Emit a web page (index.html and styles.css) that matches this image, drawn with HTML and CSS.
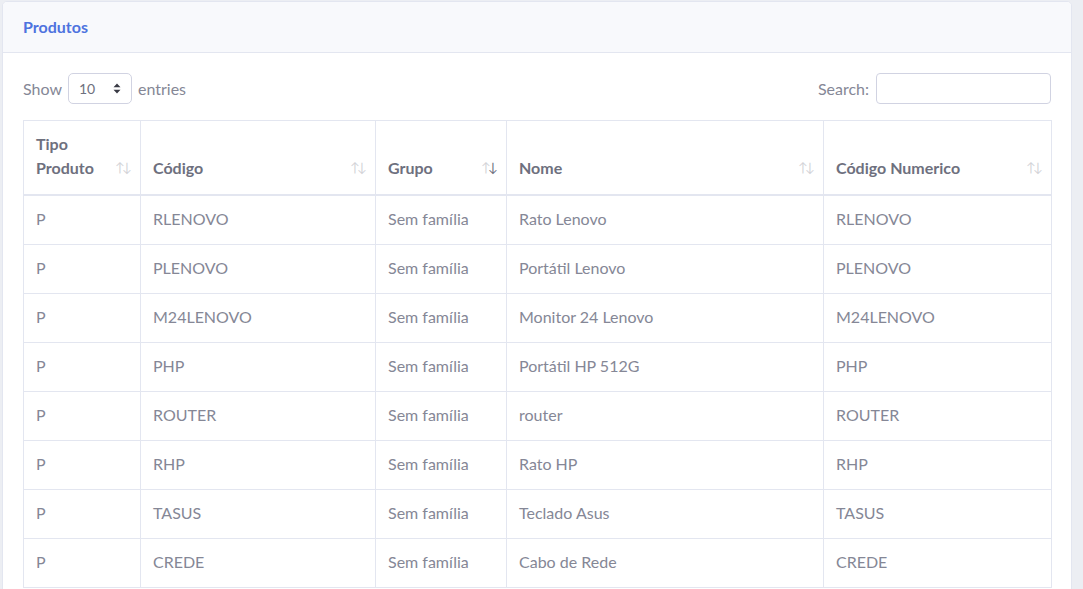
FILE: index.html
```html
<!DOCTYPE html>
<html lang="pt">
<head>
<meta charset="utf-8">
<title>Produtos</title>
<link rel="stylesheet" href="styles.css">
</head>
<body>
<div class="page">
  <div class="card">
    <div class="card-header">Produtos</div>
    <div class="card-body">
      <div class="controls">
        <div class="length">
          <span>Show</span>
          <div class="select"><span>10</span>
            <svg width="8" height="11" viewBox="0 0 8 11"><path d="M4 0.5 L7.5 4.2 H0.5 Z M4 10.5 L7.5 6.8 H0.5 Z" fill="#3a3b45"/></svg>
          </div>
          <span>entries</span>
        </div>
        <div class="filter">
          <span>Search:</span>
          <div class="input"></div>
        </div>
      </div>
      <table class="data">
        <colgroup>
          <col class="c1"><col class="c2"><col class="c3"><col class="c4"><col class="c5">
        </colgroup>
        <thead>
          <tr>
            <th>Tipo<br>Produto</th>
            <th>Código</th>
            <th class="desc">Grupo</th>
            <th>Nome</th>
            <th>Código Numerico</th>
          </tr>
        </thead>
        <tbody>
          <tr><td>P</td><td>RLENOVO</td><td>Sem família</td><td>Rato Lenovo</td><td>RLENOVO</td></tr>
          <tr><td>P</td><td>PLENOVO</td><td>Sem família</td><td>Portátil Lenovo</td><td>PLENOVO</td></tr>
          <tr><td>P</td><td>M24LENOVO</td><td>Sem família</td><td>Monitor 24 Lenovo</td><td>M24LENOVO</td></tr>
          <tr><td>P</td><td>PHP</td><td>Sem família</td><td>Portátil HP 512G</td><td>PHP</td></tr>
          <tr><td>P</td><td>ROUTER</td><td>Sem família</td><td>router</td><td>ROUTER</td></tr>
          <tr><td>P</td><td>RHP</td><td>Sem família</td><td>Rato HP</td><td>RHP</td></tr>
          <tr><td>P</td><td>TASUS</td><td>Sem família</td><td>Teclado Asus</td><td>TASUS</td></tr>
          <tr><td>P</td><td>CREDE</td><td>Sem família</td><td>Cabo de Rede</td><td>CREDE</td></tr>
        </tbody>
      </table>
    </div>
  </div>
</div>
</body>
</html>
```

FILE: styles.css
```css
html, body {
  margin: 0;
  padding: 0;
}
body {
  background: #eceef3;
  font-family: "Lato", "Open Sans", sans-serif;
  font-size: 16px;
  line-height: 24px;
  color: #858796;
  height: 589px;
  overflow: hidden;
}
.page {
  padding: 1px 0 0 2px;
}
.card {
  width: 1068px;
  background: #fff;
  border: 1px solid #e3e6f0;
  border-radius: 5px;
  overflow: hidden;
}
.card-header {
  background: #f8f9fc;
  border-bottom: 1px solid #e3e6f0;
  padding: 13px 20px;
  color: #4e73df;
  font-weight: 700;
  font-size: 16px;
}
.card-body {
  padding: 20px 20px 40px;
}
.controls {
  display: flex;
  justify-content: space-between;
  align-items: center;
  height: 31px;
  margin-bottom: 16px;
}
.length, .filter {
  display: flex;
  align-items: center;
  gap: 6px;
  font-size: 16px;
}
.select {
  border: 1px solid #d1d3e2;
  border-radius: 5px;
  display: flex;
  align-items: center;
  justify-content: space-between;
  padding: 0 10px 0 10px;
  box-sizing: border-box;
  width: 64px;
  height: 31px;
  font-size: 14px;
  color: #6e707e;
}
.input {
  width: 175px;
  height: 31px;
  box-sizing: border-box;
  border: 1px solid #d1d3e2;
  border-radius: 4px;
  margin-left: 1px;
}
table.data {
  width: 1028px;
  border-collapse: collapse;
  table-layout: fixed;
}
col.c1 { width: 117px; }
col.c2 { width: 235px; }
col.c3 { width: 131px; }
col.c4 { width: 317px; }
col.c5 { width: 228px; }
th, td {
  border: 1px solid #e3e6f0;
  padding: 11px 12px 13px;
  text-align: left;
  white-space: nowrap;
}
th {
  color: #6e707e;
  font-weight: 700;
  vertical-align: bottom;
  position: relative;
  border-bottom: 2px solid #e3e6f0;
  padding: 11px 12px 14px;
}
th::before, th::after {
  position: absolute;
  bottom: 20px;
  font-size: 13px;
  font-weight: 400;
  line-height: 1;
  opacity: 0.3;
}
th::before {
  content: "\2191";
  right: 15px;
}
th::after {
  content: "\2193";
  right: 8px;
}
th.desc::after {
  opacity: 1;
  color: #6e707e;
}
td {
  height: 24px;
}
```
